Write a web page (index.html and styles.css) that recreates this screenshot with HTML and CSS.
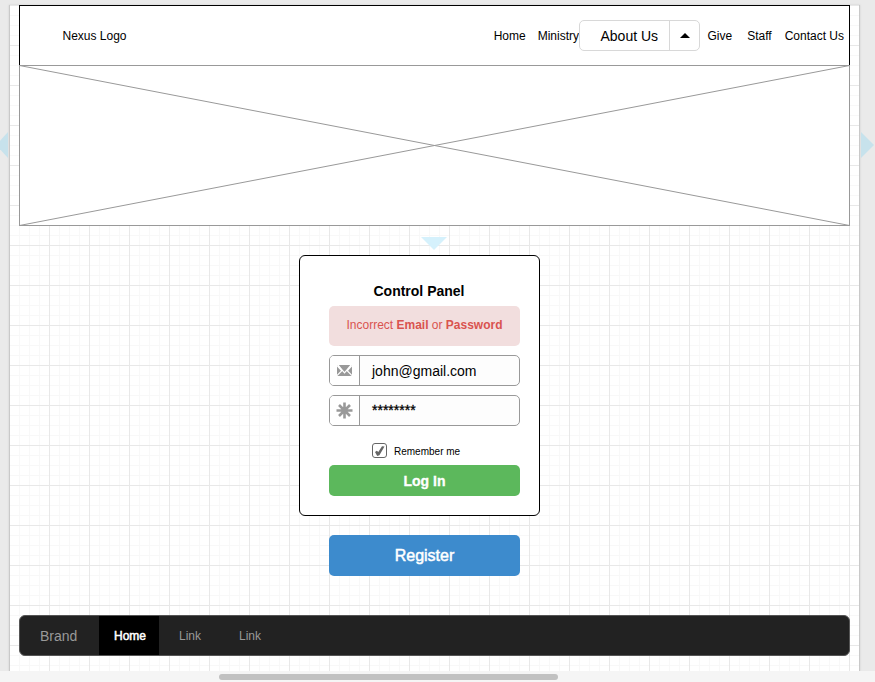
FILE: index.html
```html
<!DOCTYPE html>
<html lang="en">
<head>
<meta charset="utf-8">
<title>Control Panel</title>
<link rel="stylesheet" href="styles.css">
</head>
<body>
<div class="workspace">
  <main class="page">
    <header class="header">
      <div class="logo">Nexus Logo</div>
      <nav class="nav">
        <a class="nav-home">Home</a>
        <a class="nav-ministry">Ministry</a>
        <div class="dropdown"><span class="dropdown-label">About Us</span><span class="dropdown-toggle"><svg width="10" height="5" viewBox="0 0 10 5"><path d="M0 5 5 0 10 5Z"/></svg></span></div>
        <a class="nav-give">Give</a>
        <a class="nav-staff">Staff</a>
        <a>Contact Us</a>
      </nav>
    </header>
    <svg class="hero" width="831" height="161" viewBox="0 0 831 161"><rect x=".5" y=".5" width="830" height="160"/><path d="M.5 .5 830.5 160.5M.5 160.5 830.5 .5"/></svg>
    <form class="panel">
      <h1>Control Panel</h1>
      <div class="alert"><span>Incorrect <b>Email</b> or <b>Password</b></span></div>
      <div class="field">
        <span class="addon"><svg width="15" height="11" viewBox="0 0 15 11"><rect width="15" height="11" rx="1" fill="#999"/><path d="M0 .5 4.8 5.8 0 10.5M15 .5 10.2 5.8 15 10.5M1 0 7.5 7.8 14 0" fill="none" stroke="#fff" stroke-width="1.2"/></svg></span>
        <span class="value">john@gmail.com</span>
      </div>
      <div class="field">
        <span class="addon"><svg width="17" height="17" viewBox="0 0 17 17"><path d="M8.5 .5V16.5M.5 8.5H16.5M3 3 14 14M14 3 3 14" stroke="#999" stroke-width="2.6"/></svg></span>
        <span class="value password">********</span>
      </div>
      <div class="remember">
        <svg width="15" height="15" viewBox="0 0 15 15"><rect x=".5" y=".5" width="14" height="14" rx="2.5" fill="#fff" stroke="#666"/><path d="M3 9 4.8 7.8 6.3 9 10 3.2 12.5 3.4 7.4 12.2 5.2 12.9Z" fill="#666"/></svg>
        <span class="remember-label">Remember me</span>
      </div>
      <div class="login"><span>Log In</span></div>
    </form>
    <div class="register"><span>Register</span></div>
    <footer class="footer">
      <span class="brand">Brand</span>
      <a class="active">Home</a>
      <a>Link</a>
      <a>Link</a>
    </footer>
  </main>
  <svg class="arrow arrow-left" width="8" height="26" viewBox="0 0 8 26"><path d="M8 0V26L-4 13Z"/></svg>
  <svg class="arrow arrow-right" width="13" height="26" viewBox="0 0 13 26"><path d="M0 0V26L13 13Z"/></svg>
  <svg class="arrow arrow-down" width="26" height="13" viewBox="0 0 26 13"><path d="M0 0H26L13 13Z"/></svg>
</div>
<div class="scrollbar"><div class="thumb"></div></div>
</body>
</html>
```
FILE: styles.css
```css
* { box-sizing: border-box; }
body {
  margin: 0;
  width: 875px;
  height: 682px;
  overflow: hidden;
  background: #eaeaea;
  font: 12px/16px "Liberation Sans", Arial, sans-serif;
  color: #000;
}
svg { display: block; flex: none; }
.workspace { position: relative; height: 671px; padding: 5px 15px 0 9px; }
.page {
  height: 666px;
  padding-left: 9px;
  border: 1px solid #c9c9c9;
  border-width: 0 1px 0 1px;
  box-shadow: 0 0 2px #ccc;
  background-color: #fff;
  background-origin: border-box;
  background-image:
    linear-gradient(90deg, #e8e8e8 1px, transparent 1px),
    linear-gradient(#e8e8e8 1px, transparent 1px),
    linear-gradient(90deg, #f8f8f8 1px, transparent 1px),
    linear-gradient(#f8f8f8 1px, transparent 1px);
  background-size: 40px 40px, 40px 40px, 10px 10px, 10px 10px;
}
.header {
  width: 831px;
  height: 60px;
  display: flex;
  align-items: center;
  justify-content: space-between;
  padding: 0 5px 0 42.5px;
  border: 1px solid #000;
  border-bottom: 0;
  background: #fff;
}
.nav { display: flex; align-items: center; white-space: nowrap; }
.nav-home { margin-right: 12px; }
.nav-ministry { margin-right: .5px; }
.nav-give { margin: 0 15px 0 7px; }
.nav-staff { margin-right: 13px; }
.dropdown {
  display: flex;
  width: 121px;
  height: 31px;
  border: 1px solid #d8d8d8;
  border-radius: 5px;
  background: #fff;
}
.dropdown-label { width: 90px; padding-left: 20px; font-size: 14px; line-height: 30px; border-right: 1px solid #d8d8d8; }
.dropdown-toggle { flex: 1; display: flex; align-items: center; justify-content: center; }
.hero { fill: #fff; stroke: #999; }
.panel {
  width: 241px;
  height: 261px;
  margin: 29px 0 0 280px;
  padding: 27px 19px 0 29px;
  border: 1px solid #000;
  border-radius: 6px;
  background: #fff;
}
h1 { margin: 0 0 7px; padding-right: 11px; font-size: 14px; line-height: 16px; text-align: center; }
.alert {
  width: 191px;
  height: 40px;
  padding-top: 11px;
  border-radius: 5px;
  background: #f2dede;
  color: #d9534f;
  text-align: center;
}
.field {
  display: flex;
  width: 191px;
  height: 31px;
  margin-top: 9px;
  border: 1px solid #999;
  border-radius: 5px;
  background: #fdfdfd;
  overflow: hidden;
}
.addon { width: 30px; display: flex; align-items: center; justify-content: center; border-right: 1px solid #999; background: #fff; }
.value { padding-left: 12px; font-size: 14px; line-height: 30px; }
.password { line-height: 28px; -webkit-text-stroke: .3px #000; }
.remember { display: flex; align-items: center; gap: 7px; margin: 17px 0 7px 43px; height: 15px; font-size: 10px; }
.remember-label { padding-top: 2px; }
.login {
  width: 191px;
  height: 31px;
  border-radius: 5px;
  background: #5cb85c;
  color: #fff;
  font-size: 14px;
  font-weight: bold;
  line-height: 32px;
  text-align: center;
  -webkit-text-stroke: .3px #fff;
}
.register {
  width: 191px;
  height: 41px;
  margin: 19px 0 0 310px;
  border-radius: 5px;
  background: #3d8bcd;
  color: #fff;
  font-size: 16px;
  line-height: 41px;
  text-align: center;
  -webkit-text-stroke: .5px #fff;
}
.footer {
  display: flex;
  width: 831px;
  height: 41px;
  margin-top: 39px;
  border: 1px solid #555;
  border-radius: 6px;
  background: #222;
  color: #999;
  line-height: 41px;
}
.brand { width: 79px; padding-left: 20px; font-size: 14px; }
.footer a { width: 60px; height: 39px; padding-left: 2px; text-align: center; }
.footer .active { background: #000; color: #fff; -webkit-text-stroke: .5px #fff; }
.arrow { position: absolute; fill: #c7e2ec; }
.arrow-left { left: 0; top: 132px; }
.arrow-right { left: 861px; top: 132px; }
.arrow-down { left: 421px; top: 237px; fill: #d5f1fc; }
.scrollbar { position: relative; height: 11px; padding: 3px 0 0 219px; background: #f5f5f5; }
.thumb { width: 339px; height: 6px; border-radius: 3px; background: #c1c1c1; }
```
